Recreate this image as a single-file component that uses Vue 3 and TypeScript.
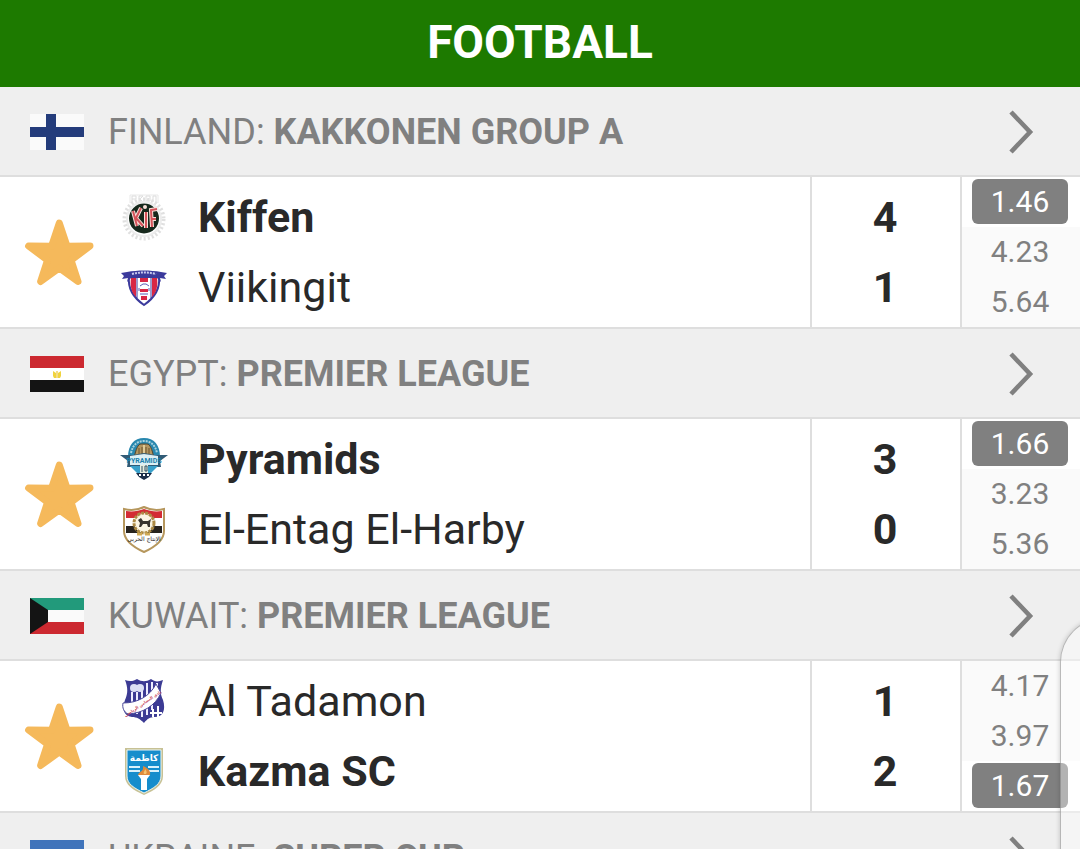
<script setup lang="ts">
import { ref } from 'vue'

interface Team {
  name: string
  logo: string
  score: number
  winner: boolean
}

interface Section {
  id: string
  country: string
  league: string
  teams: Team[]
  odds: string[]
  best: number
}

const sections: Section[] = [
  {
    id: 'finland',
    country: 'FINLAND',
    league: 'KAKKONEN GROUP A',
    teams: [
      { name: 'Kiffen', logo: 'kiffen', score: 4, winner: true },
      { name: 'Viikingit', logo: 'viikingit', score: 1, winner: false },
    ],
    odds: ['1.46', '4.23', '5.64'],
    best: 0,
  },
  {
    id: 'egypt',
    country: 'EGYPT',
    league: 'PREMIER LEAGUE',
    teams: [
      { name: 'Pyramids', logo: 'pyramids', score: 3, winner: true },
      { name: 'El-Entag El-Harby', logo: 'entag', score: 0, winner: false },
    ],
    odds: ['1.66', '3.23', '5.36'],
    best: 0,
  },
  {
    id: 'kuwait',
    country: 'KUWAIT',
    league: 'PREMIER LEAGUE',
    teams: [
      { name: 'Al Tadamon', logo: 'tadamon', score: 1, winner: false },
      { name: 'Kazma SC', logo: 'kazma', score: 2, winner: true },
    ],
    odds: ['4.17', '3.97', '1.67'],
    best: 2,
  },
  { id: 'ukraine', country: 'UKRAINE', league: 'SUPER CUP', teams: [], odds: [], best: -1 },
]

const favourites = ref<string[]>(['finland', 'egypt', 'kuwait'])

function toggle(id: string): void {
  favourites.value = favourites.value.includes(id)
    ? favourites.value.filter((f) => f !== id)
    : [...favourites.value, id]
}
</script>

<template>
  <main class="screen">
    <header class="title-bar">
      <h1 class="title">FOOTBALL</h1>
    </header>

    <section v-for="s in sections" :key="s.id">
      <a class="league" href="#">
        <svg class="flag" viewBox="0 0 54 36" aria-hidden="true">
          <g v-if="s.id === 'finland'">
            <rect width="54" height="36" fill="#fafafa" />
            <path d="M16 0h10v36H16zM0 13h54v10H0z" fill="#243c7b" />
          </g>
          <g v-else-if="s.id === 'egypt'">
            <rect width="54" height="36" fill="#fff" />
            <rect width="54" height="12" fill="#cc2930" />
            <rect y="24" width="54" height="12" fill="#141414" />
            <path d="M23 15l3 2v5h-2l-1-2zM31 15l-3 2v5h2l1-2z" fill="#f0d33e" />
            <path d="M26 15h2v7h-2z" fill="#f3dc85" />
          </g>
          <g v-else-if="s.id === 'kuwait'">
            <rect width="54" height="36" fill="#fafafa" />
            <rect width="54" height="12" fill="#229a7b" />
            <rect y="24" width="54" height="12" fill="#cc2930" />
            <path d="M0 0l18 12v12L0 36z" fill="#141414" />
          </g>
          <g v-else>
            <rect width="54" height="18" fill="#4074bb" />
            <rect y="18" width="54" height="18" fill="#f8d748" />
          </g>
        </svg>
        <span class="league-name">{{ s.country }}: <b>{{ s.league }}</b></span>
        <svg class="chevron" viewBox="0 0 26 44" aria-hidden="true">
          <path d="M3 2L22 22L3 42" fill="none" stroke="#808080" stroke-width="4.6" />
        </svg>
      </a>

      <div v-if="s.teams.length" class="match">
        <button
          class="star"
          type="button"
          aria-label="Favourite"
          :aria-pressed="favourites.includes(s.id)"
          @click="toggle(s.id)"
        >
          <svg class="star-icon" viewBox="0 0 70 70" aria-hidden="true">
            <path
              d="M35.3 6L43 29.2L66 29L47 43.2L54 64.5L35.3 51L16.6 64.5L23.6 43.2L4.6 29L27.6 29.2Z"
              :fill="favourites.includes(s.id) ? '#f5b95b' : 'none'"
              stroke="#f5b95b"
              stroke-width="7"
              stroke-linejoin="round"
            />
          </svg>
        </button>

        <div class="teams">
          <div v-for="t in s.teams" :key="t.name" class="team" :class="{ winner: t.winner }">
            <svg class="logo" viewBox="0 0 48 48" aria-hidden="true">
              <g v-if="t.logo === 'kiffen'">
                <path d="M10 10V2h28v8" fill="none" stroke="#e8e8e8" />
                <path d="M12 9V3h4v3h-4M19 9V3h4l-3 3 3 3M26 3h4v5h-4zM33 9V3h3v6" fill="none" stroke="#dcdcdc" />
                <circle cx="24" cy="26" r="19" fill="none" stroke="#e0e0e0" stroke-width="5" stroke-dasharray="2 2" />
                <circle cx="24" cy="26" r="17" fill="none" stroke="#ececec" stroke-width="2" />
                <circle cx="24" cy="25.5" r="15" fill="#16281c" />
                <g fill="none" stroke="#f8e0da" stroke-width="4">
                  <path d="M13 18l4 15M21 15l-5 10 7 8M26 19v16M32 34l-1-17 6-1M32 26h4" />
                </g>
                <g fill="none" stroke="#d4535a" stroke-width="2">
                  <path d="M13 18l4 15M21 15l-5 10 7 8M26 19v16M32 34l-1-17 6-1M32 26h4" />
                </g>
                <circle cx="25" cy="14" r="2" fill="#f8e0da" />
              </g>

              <g v-else-if="t.logo === 'viikingit'">
                <path d="M9 14h30c1 9-2 19-15 28C11 33 8 23 9 14z" fill="#fff" stroke="#3b3a9c" stroke-width="2" />
                <path d="M11 15h5v19c-5-5-6-12-5-19zM32 15h5c1 7 0 14-5 19z" fill="#d82745" />
                <path d="M20 15h8v4h-8zM20 26h8v3h-8zM21 33h6v4h-6z" fill="#d82745" />
                <path d="M17 15v20M31 15v20" stroke="#3b3a9c" stroke-width="1" fill="none" />
                <path d="M20 23l3-2h3l3 2M20 31h8M19 28v-3M29 28v-3" stroke="#5b5ab4" fill="none" />
                <path d="M1 10l6-1c11-2 23-2 34 0l6 1-3 3 2 3-6-1 1 4-4-4c-9-2-17-2-26 0l-4 4 1-4-6 1 2-3z" fill="#3b3a9c" />
                <path d="M12 11c8-2 16-2 24 0" fill="none" stroke="#c9caf0" stroke-width="2" stroke-dasharray="2 1" />
              </g>

              <g v-else-if="t.logo === 'pyramids'">
                <path d="M8 22C8 10 14 3 24 3s16 7 16 19z" fill="#2887ae" />
                <path d="M11 18C13 9 18 6 24 6s11 3 13 12" fill="none" stroke="#a9d3df" stroke-width="2" stroke-dasharray="2 1" />
                <path d="M14 23c2-9 4-14 7-14h6c3 0 5 5 7 14z" fill="#b39560" stroke="#54462d" />
                <path d="M19 22V13M22 12v11M26 12v11M29 13v9" stroke="#6b552f" />
                <path d="M23 10h2v12h-2z" fill="#e0cb97" />
                <path d="M0 20h13l11-2 11 2h13l-8 6 1 6H7l1-6z" fill="#315b76" />
                <path d="M10 21l14-2 14 2v9H10z" fill="#dceff4" />
                <text x="24" y="28" text-anchor="middle" font-size="7" font-weight="700" fill="#1a80ab">PYRAMIDS</text>
                <path d="M10 31h28l-7 7H17z" fill="#39a0ca" />
                <path d="M20 30h8v8h-8z" fill="#e6ecdf" />
                <path d="M22 31v6M25 31h2v5h-2z" stroke="#315064" fill="none" />
                <path d="M16 38h16l-3 4-5 3-5-3z" fill="#1c2e48" />
                <path d="M19 40h2M23 40h2M27 40h2" stroke="#fff" stroke-width="2" />
              </g>

              <g v-else-if="t.logo === 'entag'">
                <path d="M4 4c7 2 14 1 20-2 6 3 13 4 20 2v22c0 10-9 16-20 21C13 42 4 36 4 26z" fill="#fff" stroke="#b6975d" stroke-width="2" />
                <path d="M6 6c7 1 12 0 18-2 6 2 11 3 18 2v7H6z" fill="#d32c34" />
                <path d="M6 21h36v7H6z" fill="#27231e" />
                <circle cx="24" cy="18" r="10" fill="#fbf5e3" stroke="#ad8a44" stroke-width="3" stroke-dasharray="3 1" />
                <path d="M18 15l3-2 2 3h5l3-2-1 4v4h-2l-1-3h-4l-2 3h-2l1-4z" fill="#39352f" />
                <path d="M17 29h14" stroke="#d0a955" stroke-width="3" stroke-dasharray="5 3" />
                <text x="24" y="36" text-anchor="middle" font-family="DejaVu Sans" font-size="6" fill="#222">الإنتاج الحربى</text>
              </g>

              <g v-else-if="t.logo === 'tadamon'">
                <path d="M5 3c5 2 9 1 12-1 5 3 9 3 14 0 4 3 7 3 12 1-3 9-3 14 0 20 3 10 0 17-8 17-5 0-8 2-11 6-4-4-7-6-12-6-9-1-10-9-7-17 3-7 3-12 0-20z" fill="#3c3b94" />
                <path d="M12 15v18M17 15v22M22 14v26M27 6v32M32 5v28M37 6v10" stroke="#eef" stroke-width="2" />
                <circle cx="14" cy="11" r="4" fill="#dce0f5" />
                <circle cx="20" cy="11" r="4" fill="#dce0f5" />
                <path d="M3 26C18 26 30 19 36 7l5 9C35 29 23 36 8 37c-4-2-6-6-5-11z" fill="#fff" stroke="#4c4a9a" />
                <text x="23" y="28" text-anchor="middle" font-family="DejaVu Sans" font-size="4" font-weight="700" fill="#c33b53" transform="rotate(-34 23 27)">نادي التضامن الرياضي</text>
                <path d="M30 36h12M33 32v8M38 29v11" stroke="#fff" stroke-width="2" />
              </g>

              <g v-else>
                <path d="M5 1h38v28c0 9-8 14-19 19C13 43 5 38 5 29z" fill="#c7c194" />
                <path d="M7 3h34v26c0 8-7 12-17 17C14 41 7 37 7 29z" fill="#168dcc" stroke="#e9f4f3" />
                <text x="24" y="14" text-anchor="middle" font-family="DejaVu Sans" font-size="9" fill="#fff">كاظمة</text>
                <path d="M9 20h11M28 20h11M9 24h11M28 24h11" stroke="#d9f1fb" stroke-width="2" />
                <path d="M18 28h12l-3 4v11h-6V32z" fill="#fff" />
                <path d="M18 28c1-4 6-3 5-9 5 2 8 5 7 9z" fill="#df8a3b" />
                <path d="M24 27c-1-2 1-3 1-5 2 2 2 4 1 5z" fill="#f6c36e" />
              </g>
            </svg>
            <span>{{ t.name }}</span>
          </div>
        </div>

        <div class="scores">
          <span v-for="t in s.teams" :key="t.name" class="score">{{ t.score }}</span>
        </div>

        <div class="odds">
          <div v-for="(o, i) in s.odds" :key="o" class="odd-cell" :class="{ best: i === s.best }">
            <button type="button" class="odd">{{ o }}</button>
          </div>
        </div>
      </div>
    </section>

    <div class="edge-panel"></div>
  </main>
</template>

<style>
body {
  margin: 0;
  overflow: hidden;
}
</style>

<style scoped>
.screen {
  position: relative;
  height: 100vh;
  overflow: hidden;
  background: #fff;
  color: #292929;
  font-family: Roboto, "Liberation Sans", sans-serif;
}

.title-bar {
  display: flex;
  justify-content: center;
  align-items: center;
  box-sizing: border-box;
  height: 87px;
  padding-bottom: 4px;
  background: #1d7a00;
  color: #fff;
}

.title {
  margin: 0;
  font-size: 46px;
  font-weight: 700;
  line-height: 56px;
}

.league {
  display: flex;
  align-items: center;
  box-sizing: border-box;
  height: 90px;
  padding: 2px 46px 0 30px;
  border-bottom: 2px solid #dedede;
  background: #efefef;
  color: #808080;
  text-decoration: none;
}

.flag {
  width: 54px;
  height: 36px;
  margin-right: 24px;
}

.league-name {
  flex: 1;
  font-size: 36px;
  line-height: 44px;
  white-space: nowrap;
}

.chevron {
  width: 26px;
  height: 44px;
}

.match {
  display: flex;
  box-sizing: border-box;
  height: 152px;
  border-bottom: 2px solid #dedede;
}

.star {
  width: 120px;
  padding: 0 2px 0 0;
  border: 0;
  background: none;
}

.star-icon {
  display: block;
  width: 70px;
  height: 70px;
  margin: 0 auto;
}

.teams {
  flex: 1;
  padding: 5px 0;
}

.team {
  display: flex;
  align-items: center;
  gap: 30px;
  height: 70px;
  font-size: 43px;
  white-space: nowrap;
}

.winner {
  font-weight: 700;
}

.logo {
  flex: none;
  width: 48px;
  height: 48px;
}

.scores {
  display: flex;
  flex-direction: column;
  box-sizing: border-box;
  width: 150px;
  padding: 5px 2px 5px 0;
  border-left: 2px solid #dedede;
}

.score {
  height: 70px;
  font-size: 43px;
  font-weight: 700;
  line-height: 70px;
  text-align: center;
}

.odds {
  box-sizing: border-box;
  width: 120px;
  border-left: 2px solid #dedede;
}

.odd-cell {
  box-sizing: border-box;
  height: 50px;
  padding: 2px 12px 3px 10px;
  background: #fafafa;
}

.odd {
  display: block;
  width: 100%;
  height: 45px;
  padding: 0;
  border: 0;
  border-radius: 6px;
  background: none;
  color: #808080;
  font-family: inherit;
  font-size: 30px;
  line-height: 45px;
  text-align: center;
}

.best {
  background: #fff;
}

.best .odd {
  background: #808080;
  color: #fff;
}

/* Translucent drawer peeking in from the right edge */
.edge-panel {
  position: absolute;
  top: 618px;
  right: -68px;
  bottom: -60px;
  width: 88px;
  box-sizing: border-box;
  border: 1px solid rgba(120, 120, 120, 0.5);
  border-radius: 44px;
  background: rgba(255, 255, 255, 0.4);
  box-shadow: 0 0 5px rgba(0, 0, 0, 0.2);
}
</style>
